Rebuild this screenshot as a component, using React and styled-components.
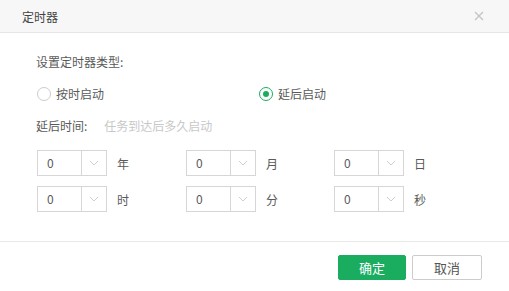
import styled, { createGlobalStyle } from "styled-components"
import { useState } from "react"

const GlobalStyle = createGlobalStyle`
  body {
    margin: 0;
    background: #fff;
    font-family: "Noto Sans CJK SC", "Noto Sans", sans-serif;
    font-size: 12px;
    color: #555;
  }
`

const units = [
  ["年", "月", "日"],
  ["时", "分", "秒"],
]

export default function App() {
  const [mode, setMode] = useState("delay")

  return (
    <Dialog>
      <GlobalStyle />
      <Header>
        <Title>定时器</Title>
        <Close aria-label="close">
          <svg width="10" height="10" viewBox="0 0 10 10">
            <path d="M1 1L9 9M9 1L1 9" stroke="#c4c4c4" strokeWidth="1.3" />
          </svg>
        </Close>
      </Header>
      <Body>
        <Line>设置定时器类型:</Line>
        <RadioRow>
          <RadioItem onClick={() => setMode("time")}>
            <Circle $on={mode === "time"} />
            <span>按时启动</span>
          </RadioItem>
          <RadioItem onClick={() => setMode("delay")}>
            <Circle $on={mode === "delay"} />
            <span>延后启动</span>
          </RadioItem>
        </RadioRow>
        <Line>
          延后时间:<Hint>任务到达后多久启动</Hint>
        </Line>
        <Grid>
          {units.flat().map((u) => (
            <Field key={u}>
              <Select>
                <Value>0</Value>
                <Arrow>
                  <svg width="10" height="6" viewBox="0 0 10 6">
                    <path d="M1 1L5 5L9 1" fill="none" stroke="#cfcfcf" strokeWidth="1" />
                  </svg>
                </Arrow>
              </Select>
              <Unit>{u}</Unit>
            </Field>
          ))}
        </Grid>
      </Body>
      <Footer>
        <Button $primary>确定</Button>
        <Button>取消</Button>
      </Footer>
    </Dialog>
  )
}

const Dialog = styled.div`
  width: 509px;
  height: 291px;
  display: flex;
  flex-direction: column;
  background: #fff;
`
const Header = styled.div`
  height: 32px;
  display: flex;
  align-items: center;
  justify-content: space-between;
  padding: 0 25px 0 22px;
  background: #f7f7f7;
  border-bottom: 1px solid #e6e6e6;
`
const Title = styled.div`
  color: #444;
  font-size: 12px;
`
const Close = styled.div`
  display: flex;
  align-items: center;
  cursor: pointer;
`
const Body = styled.div`
  display: flex;
  flex-direction: column;
  gap: 16px;
  padding: 21px 0 29px 36px;
`
const Line = styled.div`
  line-height: 16px;
  color: #5a5a5a;
`
const Hint = styled.span`
  color: #c8c8c8;
  margin-left: 17px;
`
const RadioRow = styled.div`
  display: grid;
  grid-template-columns: 222px 200px;
  padding-left: 1px;
  height: 16px;
`
const RadioItem = styled.label`
  display: flex;
  align-items: center;
  gap: 5px;
  line-height: 16px;
  color: #5a5a5a;
  cursor: pointer;
`
const Circle = styled.span`
  width: 14px;
  height: 14px;
  box-sizing: border-box;
  border-radius: 50%;
  border: 1px solid ${(p) => (p.$on ? "#1aad5f" : "#cccccc")};
  display: flex;
  align-items: center;
  justify-content: center;
  &::after {
    content: "";
    width: 6px;
    height: 6px;
    border-radius: 50%;
    background: ${(p) => (p.$on ? "#1aad5f" : "transparent")};
  }
`
const Grid = styled.div`
  display: grid;
  grid-template-columns: 149px 148px 148px;
  row-gap: 10px;
  padding-left: 1px;
`
const Field = styled.div`
  display: flex;
  align-items: center;
  gap: 10px;
`
const Select = styled.div`
  width: 70px;
  height: 26px;
  box-sizing: border-box;
  border: 1px solid #d6d6d6;
  display: flex;
`
const Value = styled.div`
  width: 44px;
  box-sizing: border-box;
  padding-left: 9px;
  line-height: 24px;
  color: #5a5a5a;
  border-right: 1px solid #d6d6d6;
`
const Arrow = styled.div`
  flex: 1;
  display: flex;
  align-items: center;
  justify-content: center;
`
const Unit = styled.span`
  color: #5a5a5a;
`
const Footer = styled.div`
  border-top: 1px solid #e8e8e8;
  display: flex;
  justify-content: flex-end;
  gap: 6px;
  padding: 13px 27px 0 0;
`
const Button = styled.button`
  width: ${(p) => (p.$primary ? "68px" : "70px")};
  height: 25px;
  box-sizing: border-box;
  border-radius: 2px;
  font-family: inherit;
  font-size: 13px;
  cursor: pointer;
  border: 1px solid ${(p) => (p.$primary ? "#1aad5f" : "#cccccc")};
  background: ${(p) => (p.$primary ? "#1aad5f" : "#fff")};
  color: ${(p) => (p.$primary ? "#fff" : "#555")};
`
